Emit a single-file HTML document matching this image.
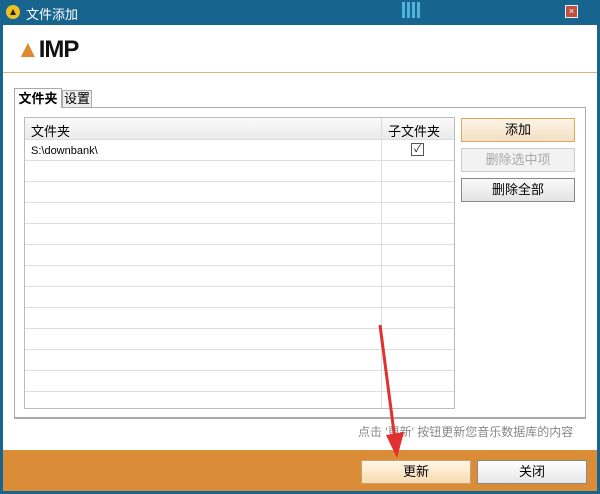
<!DOCTYPE html><html><head><style>
body{margin:0;width:600px;height:494px;background:#17658f;font-family:"Liberation Sans","Noto Sans CJK SC",sans-serif;font-size:12px;position:relative;overflow:hidden}
.a{position:absolute}
</style></head><body>
<div class="a" style="left:6px;top:5px;width:14px;height:14px;border-radius:50%;background:#f0c020"></div>
<div class="a" style="left:10px;top:9px;width:0;height:0;border-left:3px solid transparent;border-right:3px solid transparent;border-bottom:6px solid #222"></div>
<div class="a" style="left:26px;top:4px;color:#fff;font-size:13px">文件添加</div>
<div class="a" style="left:402px;top:2px;width:20px;height:16px;background:repeating-linear-gradient(90deg,#5cc8f0 0 3px,transparent 3px 5px);opacity:.8"></div>
<div class="a" style="left:565px;top:5px;width:11px;height:11px;background:#c05040;border:1px solid #eee;color:#fff;font-size:9px;line-height:11px;text-align:center">×</div>
<div class="a" style="left:3px;top:25px;width:594px;height:466px;background:#fff"></div>
<div class="a" style="left:16px;top:36px;font:bold 24px 'Liberation Sans',sans-serif;color:#111;letter-spacing:-1px"><span style="color:#e08a30">▲</span>IMP</div>
<div class="a" style="left:3px;top:72px;width:594px;height:1px;background:#e0b080"></div>
<div class="a" style="left:14px;top:88px;width:46px;height:19px;border:1px solid #aaa;border-bottom:none;background:#fff;font-weight:bold;line-height:20px;text-align:center;z-index:2;font-size:13px">文件夹</div>
<div class="a" style="left:62px;top:90px;width:28px;height:16px;border:1px solid #aaa;background:#eee;line-height:16px;text-align:center;z-index:2;font-size:13px">设置</div>
<div class="a" style="left:14px;top:107px;width:570px;height:309px;border:1px solid #aaa;border-bottom:2px solid #aaa"></div>
<div class="a" style="left:24px;top:117px;width:429px;height:290px;border:1px solid #bbb;background:#fff;overflow:hidden">
<div style="height:21px;background:linear-gradient(#fafafa,#eaeaea);border-bottom:1px solid #ddd;position:relative"><span class="a" style="left:6px;top:3px;font-size:13px">文件夹</span><span class="a" style="left:356px;top:0;width:1px;height:21px;background:#ddd"></span><span class="a" style="left:363px;top:3px;font-size:13px">子文件夹</span></div>
<div style="height:288px;background:repeating-linear-gradient(#fff 0 20px,#ddd 20px 21px);position:relative">
<span class="a" style="left:356px;top:0;width:1px;height:288px;background:#ddd"></span>
<span class="a" style="left:6px;top:5px;font-size:11px">S:\downbank\</span>
<span class="a" style="left:386px;top:3px;width:11px;height:11px;border:1px solid #555;font-size:10px;line-height:11px;text-align:center">✓</span>
</div></div>
<div class="a" style="left:461px;top:118px;width:112px;height:22px;border:1px solid #d8a860;background:linear-gradient(#fdf4e6,#f3e0c4);text-align:center;line-height:22px;font-size:13px">添加</div>
<div class="a" style="left:461px;top:148px;width:112px;height:22px;border:1px solid #ccc;background:#f2f2f2;color:#aaa;text-align:center;line-height:22px;font-size:13px">删除选中项</div>
<div class="a" style="left:461px;top:178px;width:112px;height:22px;border:1px solid #888;background:linear-gradient(#fafafa,#e4e4e4);text-align:center;line-height:22px;font-size:13px">删除全部</div>
<div class="a" style="left:358px;top:423px;color:#888;font-size:12px">点击 '更新' 按钮更新您音乐数据库的内容</div>
<div class="a" style="left:3px;top:450px;width:594px;height:41px;background:#db8c36"></div>
<div class="a" style="left:361px;top:460px;width:108px;height:22px;border:1px solid #c8a070;background:linear-gradient(#fff6e6,#f8dcb0);text-align:center;line-height:22px;font-size:13px">更新</div>
<div class="a" style="left:477px;top:460px;width:108px;height:22px;border:1px solid #888;background:linear-gradient(#fff,#e6e6e6);text-align:center;line-height:22px;font-size:13px">关闭</div>
<svg class="a" style="left:370px;top:320px" width="40" height="140"><line x1="10" y1="5" x2="25" y2="120" stroke="#e03030" stroke-width="3"/><polygon points="16,115 34,112 27,138" fill="#e03030"/></svg>
</body></html>
